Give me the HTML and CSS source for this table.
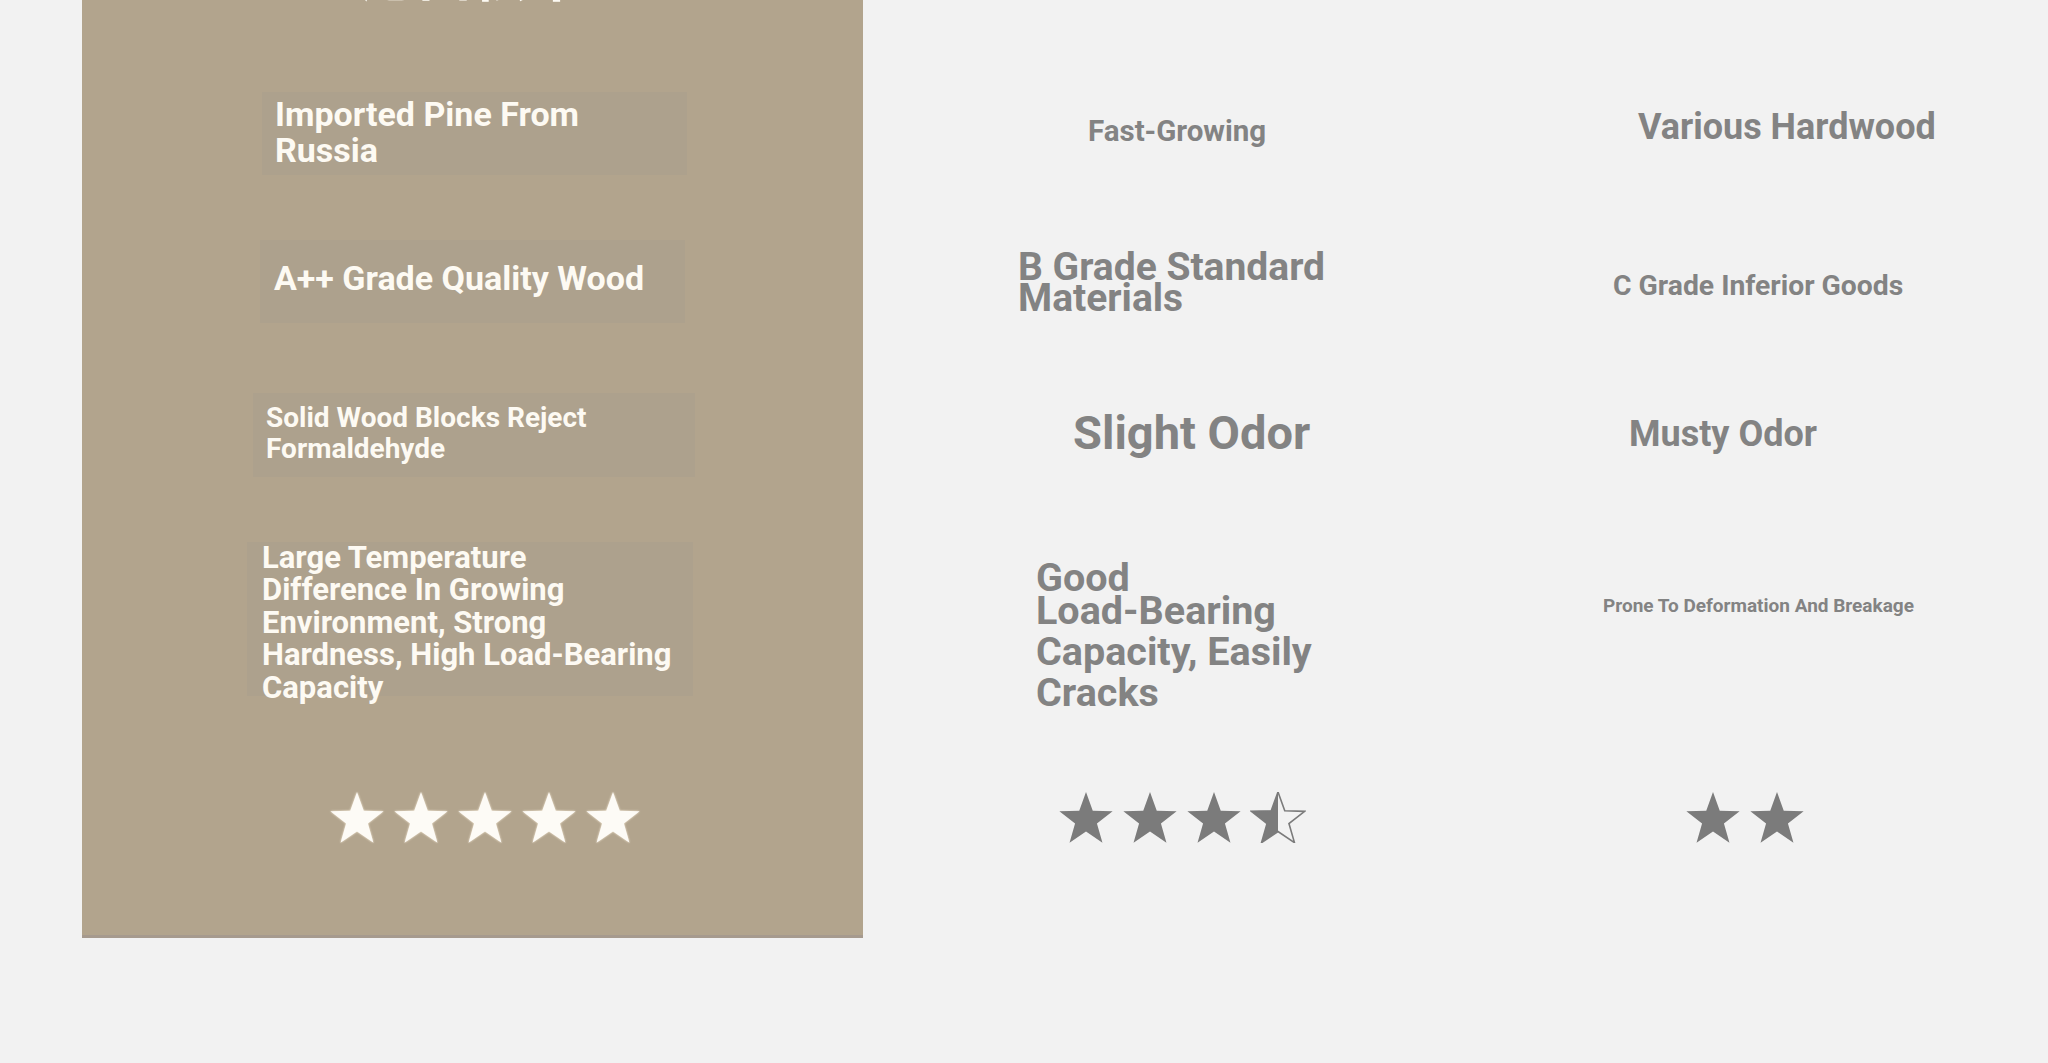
FILE: index.html
```html
<!DOCTYPE html>
<html lang="en">
<head>
<meta charset="UTF-8">
<title>Pine Comparison</title>
<link rel="stylesheet" href="styles.css">
</head>
<body>

<!-- star shapes used by the rating rows -->
<svg class="defs" width="0" height="0">
  <defs>
    <polygon id="star" points="28,0 34.76,18.7 54.63,19.35 38.94,31.55 44.46,50.65 28,39.5 11.54,50.65 17.06,31.55 1.37,19.35 21.24,18.7"/>
    <linearGradient id="halfFill" x1="0" x2="1" y1="0" y2="0">
      <stop offset="0.5" stop-color="#7b7b7b"/>
      <stop offset="0.5" stop-color="#7b7b7b" stop-opacity="0"/>
    </linearGradient>
  </defs>
</svg>

<main class="compare">

  <!-- our wood: highlighted column -->
  <section class="col pine">
    <div class="row head"><h1 class="title">进口松木</h1></div>
    <div class="row r1"><p class="tag t1">Imported Pine From<br>Russia</p></div>
    <div class="row r2"><p class="tag t2">A++ Grade Quality Wood</p></div>
    <div class="row r3"><p class="tag t3">Solid Wood Blocks Reject<br>Formaldehyde</p></div>
    <div class="row r4"><p class="tag t4">Large Temperature<br>Difference In Growing<br>Environment, Strong<br>Hardness, High Load-Bearing<br>Capacity</p></div>
    <div class="row r5">
      <div class="stars light">
        <svg viewBox="0 0 56 51"><use href="#star"/></svg>
        <svg viewBox="0 0 56 51"><use href="#star"/></svg>
        <svg viewBox="0 0 56 51"><use href="#star"/></svg>
        <svg viewBox="0 0 56 51"><use href="#star"/></svg>
        <svg viewBox="0 0 56 51"><use href="#star"/></svg>
      </div>
    </div>
  </section>

  <!-- fast growing wood -->
  <section class="col fir">
    <div class="row head"></div>
    <div class="row r1"><p class="note f1">Fast-Growing</p></div>
    <div class="row r2"><p class="note f2">B Grade Standard<br>Materials</p></div>
    <div class="row r3"><p class="note f3">Slight Odor</p></div>
    <div class="row r4"><p class="note f4"><span class="lead">Good</span>Load-Bearing<br>Capacity, Easily<br>Cracks</p></div>
    <div class="row r5">
      <div class="stars dark">
        <svg viewBox="0 0 56 51"><use href="#star"/></svg>
        <svg viewBox="0 0 56 51"><use href="#star"/></svg>
        <svg viewBox="0 0 56 51"><use href="#star"/></svg>
        <svg viewBox="0 0 56 51"><use href="#star" class="half"/></svg>
      </div>
    </div>
  </section>

  <!-- mixed hardwood -->
  <section class="col misc">
    <div class="row head"></div>
    <div class="row r1"><p class="note m1">Various Hardwood</p></div>
    <div class="row r2"><p class="note m2">C Grade Inferior Goods</p></div>
    <div class="row r3"><p class="note m3">Musty Odor</p></div>
    <div class="row r4"><p class="note m4">Prone To Deformation And Breakage</p></div>
    <div class="row r5">
      <div class="stars dark">
        <svg viewBox="0 0 56 51"><use href="#star"/></svg>
        <svg viewBox="0 0 56 51"><use href="#star"/></svg>
      </div>
    </div>
  </section>

</main>

</body>
</html>
```

FILE: styles.css
```css
/* page */
body
{
  margin: 0;
  background: #f2f2f2;
  font-family: Roboto, "Liberation Sans", sans-serif;
  font-weight: 700;
  overflow: hidden;
}
.defs
{
  position: absolute;
}
/* three columns side by side, scrolled a little past the top */
.compare
{
  display: flex;
  margin: -64px 0 0 82px;
}
.col
{
  display: flex;
  flex-direction: column;
}
.pine
{
  width: 781px;
  flex: none;
  background: #b2a48d;
  padding-bottom: 18px;
  border-bottom: 3px solid #a69a8e;
  box-shadow: 0 2px 0 #faf5ee;
}
.fir
{
  width: 627px;
  flex: none;
}
.misc
{
  flex: 1;
}
/* rows share heights across columns */
.row
{
  display: flex;
  align-items: flex-start;
  flex: none;
}
.head { height: 120px; }
.r1 { height: 155px; }
.r2 { height: 141px; }
.r3 { height: 166px; }
.r4 { height: 199px; }
.r5 { height: 200px; }

/* cut off heading at the top */
.title
{
  margin: 4px 0 0 0;
  width: 100%;
  text-align: center;
  font-family: "Noto Sans CJK SC", sans-serif;
  font-size: 56px;
  line-height: 64px;
  color: #fdfaf3;
}

/* text boxes on the brown column */
.tag
{
  margin: 0;
  box-sizing: border-box;
  background: rgba(150, 148, 140, 0.16);
  color: #fdfaf3;
  white-space: nowrap;
}
.t1
{
  margin: 36px 0 0 180px;
  width: 425px;
  height: 83px;
  padding: 4px 0 0 13px;
  font-size: 34px;
  line-height: 36px;
}
.t2
{
  margin: 29px 0 0 178px;
  width: 425px;
  height: 83px;
  padding: 20px 0 0 14px;
  font-size: 34px;
  line-height: 36px;
}
.t3
{
  margin: 41px 0 0 171px;
  width: 442px;
  height: 84px;
  padding: 9px 0 0 13px;
  font-size: 28px;
  line-height: 31px;
}
.t4
{
  margin: 24px 0 0 165px;
  width: 446px;
  height: 154px;
  padding: 0 0 0 15px;
  font-size: 31px;
  line-height: 32.4px;
}

/* grey texts on the other columns */
.note
{
  margin: 0;
  color: #838383;
  white-space: nowrap;
}
.f1 { margin: 57px 0 0 225px; font-size: 29.5px; line-height: 36px; }
.f2 { margin: 41px 0 0 155px; font-size: 39px; line-height: 31px; }
.f3 { margin: 53px 0 0 210px; font-size: 47px; line-height: 56px; }
.f4 { margin: 47px 0 0 173px; font-size: 39.5px; line-height: 41px; }
.lead
{
  display: block;
  line-height: 25px;
}
.m1 { margin: 51px 0 0 148px; font-size: 36px; line-height: 40px; }
.m2 { margin: 58px 0 0 123px; font-size: 28.3px; line-height: 34px; }
.m3 { margin: 62px 0 0 139px; font-size: 36px; line-height: 40px; }
.m4 { margin: 76px 0 0 113px; font-size: 19px; line-height: 24px; }

/* ratings */
.stars
{
  display: flex;
  gap: 8px;
  margin: 75px 0 0 195px;
}
.stars svg
{
  width: 56px;
  height: 51px;
  display: block;
}
.light
{
  margin-left: 247px;
}
.light svg
{
  fill: #fdfbf6;
  filter: drop-shadow(0 0 1px rgba(255, 244, 225, 0.9));
}
.dark svg
{
  fill: #7b7b7b;
  filter: blur(0.4px);
}
.dark .half
{
  fill: url(#halfFill);
  stroke: #7b7b7b;
  stroke-width: 1.6px;
}
```
